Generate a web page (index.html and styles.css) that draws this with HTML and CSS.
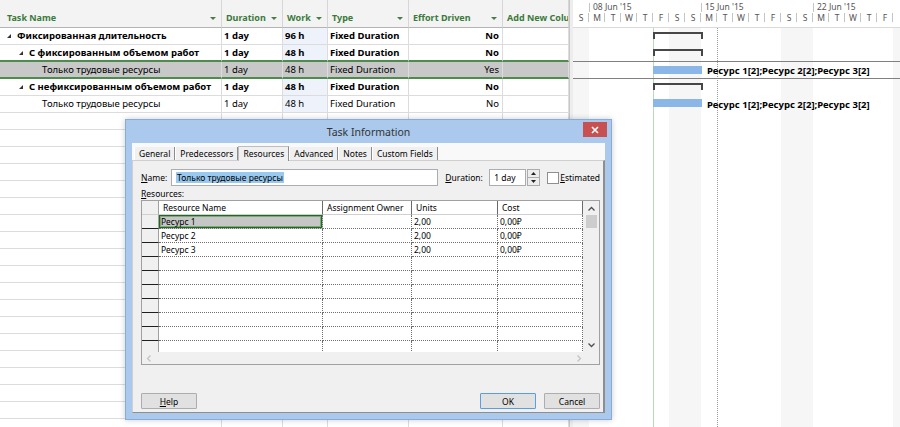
FILE: index.html
```html
<!DOCTYPE html>
<html>
<head>
<meta charset="utf-8">
<title>Task Information</title>
<link rel="stylesheet" href="styles.css">
</head>
<body>
<div class="app">
    <div class="sheet">
        <table class="tasks">
            <colgroup>
                <col style="width:222px"><col style="width:61px"><col style="width:45px"><col style="width:81px"><col style="width:94px"><col style="width:66px">
            </colgroup>
            <thead>
                <tr>
                    <th class="first"><div class="hd">Task Name<i class="dd"></i></div></th>
                    <th><div class="hd">Duration<i class="dd"></i></div></th>
                    <th><div class="hd">Work<i class="dd"></i></div></th>
                    <th><div class="hd">Type<i class="dd"></i></div></th>
                    <th><div class="hd">Effort Driven<i class="dd"></i></div></th>
                    <th><div class="hd">Add New Column</div></th>
                </tr>
            </thead>
            <tbody>
                <tr class="sum">
                    <td><div class="tn lv0"><svg class="tri" width="4" height="4"><polygon points="4,0 4,4 0,4"/></svg>Фиксированная длительность</div></td>
                    <td>1 day</td><td class="work">96 h</td><td>Fixed Duration</td><td class="r">No</td><td></td>
                </tr>
                <tr class="sum before-sel">
                    <td><div class="tn lv1"><svg class="tri" width="4" height="4"><polygon points="4,0 4,4 0,4"/></svg>С фиксированным объемом работ</div></td>
                    <td>1 day</td><td class="work">48 h</td><td>Fixed Duration</td><td class="r">No</td><td></td>
                </tr>
                <tr class="sel">
                    <td><div class="tn lv2">Только трудовые ресурсы</div></td>
                    <td>1 day</td><td class="work">48 h</td><td>Fixed Duration</td><td class="r">Yes</td><td></td>
                </tr>
                <tr class="sum">
                    <td><div class="tn lv1"><svg class="tri" width="4" height="4"><polygon points="4,0 4,4 0,4"/></svg>С нефиксированным объемом работ</div></td>
                    <td>1 day</td><td class="work">48 h</td><td>Fixed Duration</td><td class="r">No</td><td></td>
                </tr>
                <tr>
                    <td><div class="tn lv2">Только трудовые ресурсы</div></td>
                    <td>1 day</td><td class="work">48 h</td><td>Fixed Duration</td><td class="r">No</td><td></td>
                </tr>
                <tr><td></td><td></td><td></td><td></td><td></td><td></td></tr>
                <tr><td></td><td></td><td></td><td></td><td></td><td></td></tr>
                <tr><td></td><td></td><td></td><td></td><td></td><td></td></tr>
                <tr><td></td><td></td><td></td><td></td><td></td><td></td></tr>
                <tr><td></td><td></td><td></td><td></td><td></td><td></td></tr>
                <tr><td></td><td></td><td></td><td></td><td></td><td></td></tr>
                <tr><td></td><td></td><td></td><td></td><td></td><td></td></tr>
                <tr><td></td><td></td><td></td><td></td><td></td><td></td></tr>
                <tr><td></td><td></td><td></td><td></td><td></td><td></td></tr>
                <tr><td></td><td></td><td></td><td></td><td></td><td></td></tr>
                <tr><td></td><td></td><td></td><td></td><td></td><td></td></tr>
                <tr><td></td><td></td><td></td><td></td><td></td><td></td></tr>
                <tr><td></td><td></td><td></td><td></td><td></td><td></td></tr>
                <tr><td></td><td></td><td></td><td></td><td></td><td></td></tr>
                <tr><td></td><td></td><td></td><td></td><td></td><td></td></tr>
                <tr><td></td><td></td><td></td><td></td><td></td><td></td></tr>
                <tr><td></td><td></td><td></td><td></td><td></td><td></td></tr>
                <tr><td></td><td></td><td></td><td></td><td></td><td></td></tr>
                <tr><td></td><td></td><td></td><td></td><td></td><td></td></tr>
            </tbody>
        </table>
    </div>
    <div class="divider"></div>
    <div class="gantt">
        <div class="scale">
            <div class="weeks">
                <span class="wk part"></span><span class="wk">08 Jun '15</span><span class="wk">15 Jun '15</span><span class="wk">22 Jun '15</span>
            </div>
            <div class="days">
                <span>S</span><span>M</span><span>T</span><span>W</span><span>T</span><span>F</span><span>S</span>
                <span>S</span><span>M</span><span>T</span><span>W</span><span>T</span><span>F</span><span>S</span>
                <span>S</span><span>M</span><span>T</span><span>W</span><span>T</span><span>F</span>
            </div>
        </div>
        <div class="chart">
            <div class="gline start"></div>
            <div class="gline status"></div>
            <div class="grow"><div class="sbar"></div></div>
            <div class="grow line"><div class="sbar"></div></div>
            <div class="grow line"><div class="tbar"></div><span class="blabel">Ресурс 1[2];Ресурс 2[2];Ресурс 3[2]</span></div>
            <div class="grow"><div class="sbar"></div></div>
            <div class="grow"><div class="tbar low"></div><span class="blabel">Ресурс 1[2];Ресурс 2[2];Ресурс 3[2]</span></div>
        </div>
    </div>
</div>

<div class="dlg">
    <div class="dlg-title">Task Information
        <span class="close"><svg width="8" height="8"><path d="M1 1L7 7M7 1L1 7" stroke="#fff" stroke-width="1.6"/></svg></span>
    </div>
    <div class="client">
        <div class="tabs">
            <span class="tab">General</span>
            <span class="tab">Predecessors</span>
            <span class="tab on">Resources</span>
            <span class="tab">Advanced</span>
            <span class="tab">Notes</span>
            <span class="tab">Custom Fields</span>
        </div>
        <div class="page">
            <div class="namerow">
                <span class="lbl name-lbl"><u>N</u>ame:</span>
                <div class="field name-field"><span class="hl">Только трудовые ресурсы</span></div>
                <span class="lbl dur-lbl"><u>D</u>uration:</span>
                <div class="field dur-field">1 day</div>
                <div class="spin">
                    <span><svg width="5" height="3"><polygon points="0,3 5,3 2.5,0"/></svg></span>
                    <span><svg width="5" height="3"><polygon points="0,0 5,0 2.5,3"/></svg></span>
                </div>
                <span class="check"></span>
                <span class="lbl"><u>E</u>stimated</span>
            </div>
            <div class="reslbl"><u>R</u>esources:</div>
            <div class="resgrid">
                <div class="rg-body">
                    <table class="res">
                        <colgroup>
                            <col style="width:17px"><col style="width:164px"><col style="width:89px"><col style="width:86px"><col style="width:85px">
                        </colgroup>
                        <thead>
                            <tr><th class="rh"></th><th>Resource Name</th><th>Assignment Owner</th><th>Units</th><th>Cost</th></tr>
                        </thead>
                        <tbody>
                            <tr><td class="rh"></td><td class="cur">Ресурс 1</td><td></td><td>2,00</td><td>0,00₽</td></tr>
                            <tr><td class="rh"></td><td>Ресурс 2</td><td></td><td>2,00</td><td>0,00₽</td></tr>
                            <tr><td class="rh"></td><td>Ресурс 3</td><td></td><td>2,00</td><td>0,00₽</td></tr>
                            <tr><td class="rh"></td><td></td><td></td><td></td><td></td></tr>
                            <tr><td class="rh"></td><td></td><td></td><td></td><td></td></tr>
                            <tr><td class="rh"></td><td></td><td></td><td></td><td></td></tr>
                            <tr><td class="rh"></td><td></td><td></td><td></td><td></td></tr>
                            <tr><td class="rh"></td><td></td><td></td><td></td><td></td></tr>
                            <tr><td class="rh"></td><td></td><td></td><td></td><td></td></tr>
                            <tr><td class="rh"></td><td></td><td></td><td></td><td></td></tr>
                            <tr><td class="rh"></td><td></td><td></td><td></td><td></td></tr>
                        </tbody>
                    </table>
                </div>
                <div class="vscroll">
                    <span class="arr"><svg width="7" height="5"><path d="M0.5 4.5L3.5 1.5L6.5 4.5" fill="none" stroke="#505050" stroke-width="1.3"/></svg></span>
                    <span class="thumb"></span>
                    <span class="fill"></span>
                    <span class="arr"><svg width="7" height="5"><path d="M0.5 0.5L3.5 3.5L6.5 0.5" fill="none" stroke="#505050" stroke-width="1.3"/></svg></span>
                </div>
                <div class="hscroll">
                    <svg width="5" height="7"><path d="M4.5 0.5L1.5 3.5L4.5 6.5" fill="none" stroke="#c4c4c4" stroke-width="1.3"/></svg>
                    <svg width="5" height="7"><path d="M0.5 0.5L3.5 3.5L0.5 6.5" fill="none" stroke="#c4c4c4" stroke-width="1.3"/></svg>
                </div>
                <div class="corner"></div>
            </div>
            <div class="buttons">
                <button class="btn"><u>H</u>elp</button>
                <span class="spacer"></span>
                <button class="btn ok">OK</button>
                <button class="btn">Cancel</button>
            </div>
        </div>
    </div>
</div>
</body>
</html>
```

FILE: styles.css
```css
*{
    margin:0;
    padding:0;
    box-sizing:border-box;
}
body{
    width:900px;
    height:427px;
    overflow:hidden;
    background:#fff;
    color:#000;
    font-family:"Noto Sans","DejaVu Sans",sans-serif;
    position:relative;
}
.app{
    display:flex;
    height:427px;
}

/* task sheet */
.sheet{
    width:569px;
    flex:none;
    overflow:hidden;
}
.tasks{
    width:569px;
    table-layout:fixed;
    border-collapse:separate;
    border-spacing:0;
    font-size:9.5px;
}
.tasks th{
    box-sizing:content-box;
    height:12px;
    line-height:12px;
    padding:12px 0 3px 4px;
    background:#f3f3f3;
    border-right:1px solid #d6d6d6;
    border-bottom:1px solid #b4b4b4;
    color:#3a7a3a;
    font-size:9px;
    font-weight:bold;
    text-align:left;
    white-space:nowrap;
    overflow:hidden;
}
.tasks th.first{
    padding-left:7px;
}
.hd{
    display:flex;
    align-items:center;
    justify-content:space-between;
    padding-right:5px;
}
.dd{
    width:0;
    height:0;
    border-left:3px solid transparent;
    border-right:3px solid transparent;
    border-top:3px solid #4a7a4a;
}
.tasks td{
    box-sizing:content-box;
    height:16px;
    line-height:16px;
    padding:0 0 0 2px;
    border-right:1px solid #dcdcdc;
    border-bottom:1px solid #dcdcdc;
    white-space:nowrap;
    overflow:hidden;
}
.tasks td.r{
    text-align:right;
    padding-right:3px;
}
.tasks tr.sum td{
    font-weight:bold;
}
.tasks td.work{
    background:#edf2fb;
}
.tasks tr.before-sel td{
    height:15px;
    line-height:15px;
    border-bottom:2px solid #4f8a4f;
}
.tasks tr.sel td{
    height:15px;
    line-height:15px;
    background:#c8c8c8;
    border-bottom:2px solid #4f8a4f;
}
.tn{
    display:flex;
    align-items:center;
}
.tri{
    fill:#333;
    margin-right:6px;
    flex:none;
}
.lv0{padding-left:5px;}
.lv1{padding-left:17px;}
.lv2{padding-left:40px;}

.divider{
    width:4px;
    flex:none;
    background:#ededed;
    border-left:1px solid #c8c8c8;
}

/* gantt chart */
.gantt{
    flex:1;
    overflow:hidden;
}
.scale{
    height:28px;
    border-bottom:1px solid #dadada;
    font-size:8.5px;
    color:#555;
}
.weeks{
    display:flex;
    height:12px;
    white-space:nowrap;
}
.wk{
    flex:none;
    width:112px;
    padding-left:4px;
    line-height:12px;
    padding-top:1px;
    background:linear-gradient(#c4c4c4,#c4c4c4) left 3px/1px 9px no-repeat;
}
.wk.part{
    width:16px;
    background:none;
}
.days{
    display:flex;
    height:11px;
}
.days span{
    flex:none;
    width:16px;
    text-align:center;
    line-height:11px;
    background:linear-gradient(#c4c4c4,#c4c4c4) right 1px/1px 9px no-repeat;
}
.chart{
    position:relative;
    height:399px;
    background:repeating-linear-gradient(to right,#f6f6f6 0 16px,#fff 16px 96px,#f6f6f6 96px 112px);
}
.gline{
    position:absolute;
    top:0;
    bottom:0;
}
.gline.start{
    left:80px;
    width:1px;
    background:#b8dab8;
}
.gline.status{
    left:144px;
    border-left:1px dotted #9a9a9a;
}
.grow{
    height:17px;
    display:flex;
    align-items:flex-start;
    position:relative;
}
.grow.line{
    border-bottom:1px solid #808080;
}
.sbar{
    margin:4px 0 0 80px;
    width:50px;
    height:7px;
    border:2px solid #474747;
    border-bottom:none;
}
.tbar{
    margin:4px 0 0 80px;
    width:49px;
    height:8px;
    background:#8ab6e8;
}
.tbar.low{
    margin-top:3px;
}
.blabel{
    align-self:center;
    margin-left:5px;
    font-size:9.5px;
    font-weight:bold;
    white-space:nowrap;
}

/* dialog */
.dlg{
    position:absolute;
    left:125px;
    top:119px;
    width:487px;
    height:301px;
    background:#aac9ec;
    border:1px solid #86acd9;
    padding:0 6px 6px;
    display:flex;
    flex-direction:column;
    box-shadow:0 0 6px rgba(0,0,0,.2);
    font-size:8.5px;
}
.dlg-title{
    height:23px;
    line-height:24px;
    position:relative;
    text-align:center;
    font-size:10.5px;
    color:#333;
}
.close{
    position:absolute;
    right:-2px;
    top:2px;
    width:24px;
    height:15px;
    background:#c75050;
    display:flex;
    align-items:center;
    justify-content:center;
}
.client{
    flex:1;
    display:flex;
    flex-direction:column;
    background:#f9f9f9;
}
.tabs{
    height:17px;
    display:flex;
    align-items:flex-end;
    padding-left:2px;
}
.tab{
    height:13px;
    line-height:13px;
    padding:0 4px;
    background:#f0f0f0;
    border-left:1px solid #fff;
    border-right:1px solid #8c8c8c;
}
.tab.on{
    height:15px;
    line-height:14px;
    margin-bottom:-1px;
    border:1px solid #bdbdbd;
    border-bottom:none;
    border-right-color:#8c8c8c;
    position:relative;
}
.page{
    flex:1;
    background:#f0f0f0;
    border:1px solid #cfcfcf;
    border-right:2px solid #8e8e8e;
    border-bottom:1px solid #8e8e8e;
    padding:8px 3px 0 8px;
    display:flex;
    flex-direction:column;
}
.namerow{
    height:17px;
    display:flex;
    align-items:center;
}
.lbl{
    white-space:nowrap;
}
.name-lbl{
    width:30px;
}
.field{
    height:17px;
    line-height:15px;
    background:#fff;
    border:1px solid #abadb3;
    white-space:nowrap;
    overflow:hidden;
}
.name-field{
    width:268px;
    padding-left:4px;
}
.hl{
    background:#99c9ef;
    padding:0 1px;
}
.dur-lbl{
    margin-left:7px;
    width:44px;
}
.dur-field{
    width:37px;
    padding-left:4px;
}
.spin{
    width:13px;
    height:17px;
    margin-left:1px;
    display:flex;
    flex-direction:column;
    border:1px solid #acacac;
}
.spin span{
    flex:1;
    display:flex;
    align-items:center;
    justify-content:center;
    background:#ededed;
}
.spin span + span{
    border-top:1px solid #acacac;
}
.spin svg{
    fill:#222;
}
.check{
    width:12px;
    height:12px;
    margin:0 1px 0 7px;
    background:#fff;
    border:1px solid #8f8f8f;
}
.reslbl{
    height:13px;
    line-height:13px;
    margin-top:1px;
}
.resgrid{
    height:165px;
    border:1px solid #a0a0a0;
    display:grid;
    grid-template-columns:1fr 16px;
    grid-template-rows:1fr 12px;
    background:#fff;
}
.rg-body{
    overflow:hidden;
}
.res{
    width:441px;
    table-layout:fixed;
    border-collapse:separate;
    border-spacing:0;
}
.res th{
    box-sizing:content-box;
    height:13px;
    line-height:13px;
    padding-left:4px;
    font-weight:normal;
    text-align:left;
    background:#fff;
    border-right:1px solid #6a6a6a;
    border-bottom:1px solid #d0d0d0;
    white-space:nowrap;
    overflow:hidden;
}
.res td{
    box-sizing:content-box;
    height:13px;
    line-height:13px;
    padding-left:2px;
    border-right:1px dotted #6e6e6e;
    border-bottom:1px dotted #6e6e6e;
    white-space:nowrap;
    overflow:hidden;
}
.res .rh{
    padding:0;
    background:#f0f0f0;
    border-right:1px solid #a0a0a0;
}
.res td.rh{
    border-bottom:1px solid #1e1e1e;
}
.res td.cur{
    background:#c6c6c6;
    box-shadow:inset 0 0 0 1px #1f6a1f,inset 0 0 0 2px #7fa87f;
}
.vscroll{
    background:#f0f0f0;
    display:flex;
    flex-direction:column;
    align-items:center;
}
.vscroll .arr{
    height:14px;
    display:flex;
    align-items:center;
}
.thumb{
    width:11px;
    height:13px;
    background:#cdcdcd;
}
.vscroll .fill{
    flex:1;
}
.hscroll{
    background:#f0f0f0;
    display:flex;
    align-items:center;
    justify-content:space-between;
    padding:0 1px 0 4px;
}
.corner{
    background:#f0f0f0;
}
.buttons{
    margin-top:28px;
    display:flex;
    gap:8px;
}
.spacer{
    flex:1;
}
.btn{
    width:56px;
    height:16px;
    font:inherit;
    color:#000;
    background:#e1e1e1;
    border:1px solid #adadad;
    border-radius:1px;
}
.btn.ok{
    border-color:#5a9ee0;
}
```
